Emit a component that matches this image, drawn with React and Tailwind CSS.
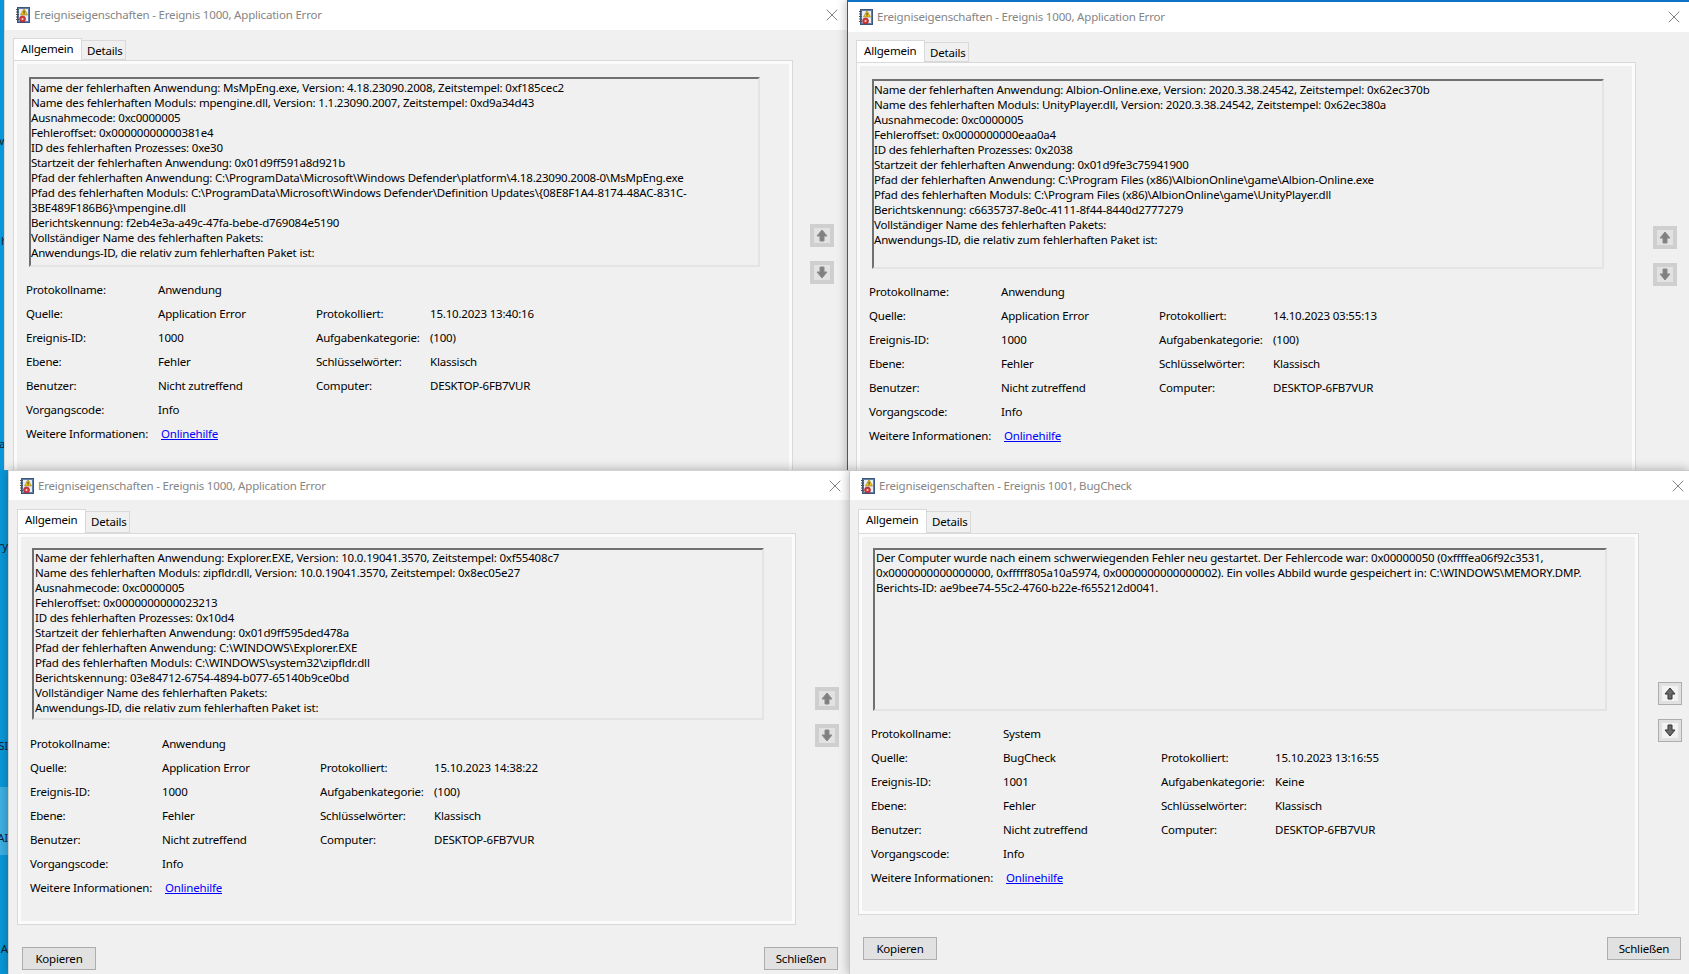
import React from 'react';
import { X } from 'lucide-react';

const Stack = '[font-family:"Noto_Sans","Open_Sans",sans-serif] text-[11.5px] tracking-[-0.19px]';

function LogIcon() {
    return (
        <svg width="16" height="16" viewBox="0 0 16 16" className="shrink-0">
            <rect x="2.5" y="0.5" width="12" height="15" fill="#5f7fae" stroke="#3d5680" />
            <rect x="4" y="2" width="9" height="12" fill="#e9edf4" />
            <path d="M1 2.5h3M1 5h3M1 7.5h3M1 10h3M1 12.5h3" stroke="#4b4f58" strokeWidth="1" />
            <path d="M9 1.5 L12.5 8 H5.5 Z" fill="#f2c81e" stroke="#9a7a10" strokeWidth="0.6" />
            <rect x="8.6" y="3.8" width="0.9" height="2.2" fill="#222" />
            <rect x="8.6" y="6.4" width="0.9" height="0.9" fill="#222" />
            <circle cx="7.5" cy="12" r="3" fill="#d8383a" stroke="#8f1f22" strokeWidth="0.6" />
            <circle cx="7.5" cy="12" r="1" fill="#f4d3d3" />
        </svg>
    );
}

function ArrowIcon({ down, active }) {
    return (
        <svg width="12" height="13" viewBox="0 0 12 13">
            <path
                d={down ? 'M4 1h4v5h3l-5 6-5-6h3z' : 'M6 1l5 6H8v5H4V7H1z'}
                fill={active ? '#6a6a6a' : '#808080'}
                stroke={active ? '#333333' : '#8a8a8a'}
                strokeWidth="1"
            />
        </svg>
    );
}

function ArrowButton({ down, active }) {
    if (active) {
        return (
            <div className="w-6 h-[23px] border border-[#adadad] bg-[#e1e1e1] flex items-center justify-center">
                <div className="w-4 h-[15px] bg-[#f3f3f3] flex items-center justify-center">
                    <ArrowIcon down={down} active />
                </div>
            </div>
        );
    }
    return (
        <div className="w-6 h-[23px] bg-[#cfcfcf] flex items-center justify-center">
            <div className="w-4 h-[15px] bg-[#e2e2e2] flex items-center justify-center">
                <ArrowIcon down={down} />
            </div>
        </div>
    );
}

function Button({ label }) {
    return (
        <div className="w-[74px] h-[23px] border border-[#adadad] bg-[#e1e1e1] flex items-center justify-center text-black">
            {label}
        </div>
    );
}

function Fields({ rows, gridClass }) {
    return (
        <div className={`grid grid-cols-[132px_158px_114px_1fr] auto-rows-[24px] items-center leading-[15px] ${gridClass}`}>
            {rows.map(row => (
                <React.Fragment key={row[0]}>
                    <div className="whitespace-nowrap">{row[0]}</div>
                    {row[0] === 'Weitere Informationen:' ? (
                        <div><span className="ml-[3px] text-[#0000ff] underline">{row[1]}</span></div>
                    ) : (
                        <div>{row[1]}</div>
                    )}
                    <div>{row[2]}</div>
                    <div>{row[3]}</div>
                </React.Fragment>
            ))}
        </div>
    );
}

function EventWindow({ w }) {
    return (
        <div className={`absolute overflow-hidden bg-[#f0f0f0] text-black ${Stack} ${w.frame}`}>
            <div className={`bg-white flex items-center justify-between ${w.title}`}>
                <div className="flex items-center gap-[3px] pl-[10px]">
                    <LogIcon />
                    <span className="text-[#858585] leading-[16px]">{w.caption}</span>
                </div>
                <X size={20} strokeWidth={1.1} className="text-[#777777]" />
            </div>
            <div className="pl-[8px]">
                <div className={`flex items-end ${w.tabs}`}>
                    <div className="h-full w-[69px] bg-white border border-b-0 border-[#d9d9d9] pl-[7px] pt-[1px] text-black relative z-10">Allgemein</div>
                    <div className="h-[calc(100%-2px)] w-[44px] bg-[#f0f0f0] border border-l-0 border-[#d9d9d9] pl-[5px] pt-[1px]">Details</div>
                </div>
                <div className="flex items-start">
                    <div className={`border border-[#d9d9d9] shrink-0 ${w.panel}`}>
                        <div className={`h-full border-[3px] border-[#fbfbfb] ${w.inner}`}>
                            <div className={`border-2 border-t-[#707070] border-l-[#707070] border-r-[#e4e4e4] border-b-[#e4e4e4] leading-[15px] ${w.box}`}>
                                {w.lines.map(l => (
                                    <div key={l} className="whitespace-nowrap">{l}</div>
                                ))}
                            </div>
                            <Fields rows={w.rows} gridClass={w.grid} />
                        </div>
                    </div>
                    <div className={`flex flex-col gap-[14px] ${w.arrows}`}>
                        <ArrowButton active={w.active} />
                        <ArrowButton down active={w.active} />
                    </div>
                </div>
                {w.footer && (
                    <div className={`flex justify-between pl-[5px] ${w.footer}`}>
                        <Button label="Kopieren" />
                        <Button label="Schließen" />
                    </div>
                )}
            </div>
        </div>
    );
}

const appFields = when => [
    ['Protokollname:', 'Anwendung', '', ''],
    ['Quelle:', 'Application Error', 'Protokolliert:', when],
    ['Ereignis-ID:', '1000', 'Aufgabenkategorie:', '(100)'],
    ['Ebene:', 'Fehler', 'Schlüsselwörter:', 'Klassisch'],
    ['Benutzer:', 'Nicht zutreffend', 'Computer:', 'DESKTOP-6FB7VUR'],
    ['Vorgangscode:', 'Info', '', ''],
    ['Weitere Informationen:', 'Onlinehilfe', '', ''],
];

const windows = [
    {
        frame: 'left-[4px] top-0 w-[844px] h-[470px] border-l border-[#d8d8d8]',
        title: 'h-[30px] pr-[6px]',
        caption: 'Ereigniseigenschaften - Ereignis 1000, Application Error',
        tabs: 'h-[22px] mt-[8px]',
        panel: 'w-[780px] h-[420px]',
        inner: 'pt-[13px] pl-[12px]',
        box: 'w-[731px] h-[190px] pt-[1px]',
        grid: 'mt-[10px] -ml-[3px]',
        arrows: 'ml-[17px] pt-[164px]',
        lines: [
            'Name der fehlerhaften Anwendung: MsMpEng.exe, Version: 4.18.23090.2008, Zeitstempel: 0xf185cec2',
            'Name des fehlerhaften Moduls: mpengine.dll, Version: 1.1.23090.2007, Zeitstempel: 0xd9a34d43',
            'Ausnahmecode: 0xc0000005',
            'Fehleroffset: 0x00000000000381e4',
            'ID des fehlerhaften Prozesses: 0xe30',
            'Startzeit der fehlerhaften Anwendung: 0x01d9ff591a8d921b',
            'Pfad der fehlerhaften Anwendung: C:\\ProgramData\\Microsoft\\Windows Defender\\platform\\4.18.23090.2008-0\\MsMpEng.exe',
            'Pfad des fehlerhaften Moduls: C:\\ProgramData\\Microsoft\\Windows Defender\\Definition Updates\\{08E8F1A4-8174-48AC-831C-',
            '3BE489F186B6}\\mpengine.dll',
            'Berichtskennung: f2eb4e3a-a49c-47fa-bebe-d769084e5190',
            'Vollständiger Name des fehlerhaften Pakets:',
            'Anwendungs-ID, die relativ zum fehlerhaften Paket ist:',
        ],
        rows: appFields('15.10.2023 13:40:16'),
    },
    {
        frame: 'left-[847px] top-0 w-[842px] h-[470px] border-l border-t-2 border-l-[#3c5a75] border-t-[#0f72c4] shadow-[0_0_10px_rgba(0,0,0,0.3)]',
        title: 'h-[30px] pr-[5px]',
        caption: 'Ereigniseigenschaften - Ereignis 1000, Application Error',
        tabs: 'h-[22px] mt-[8px]',
        panel: 'w-[780px] h-[420px]',
        inner: 'pt-[13px] pl-[12px]',
        box: 'w-[732px] h-[190px] pt-[1px]',
        grid: 'mt-[10px] -ml-[3px]',
        arrows: 'ml-[17px] pt-[164px]',
        lines: [
            'Name der fehlerhaften Anwendung: Albion-Online.exe, Version: 2020.3.38.24542, Zeitstempel: 0x62ec370b',
            'Name des fehlerhaften Moduls: UnityPlayer.dll, Version: 2020.3.38.24542, Zeitstempel: 0x62ec380a',
            'Ausnahmecode: 0xc0000005',
            'Fehleroffset: 0x0000000000eaa0a4',
            'ID des fehlerhaften Prozesses: 0x2038',
            'Startzeit der fehlerhaften Anwendung: 0x01d9fe3c75941900',
            'Pfad der fehlerhaften Anwendung: C:\\Program Files (x86)\\AlbionOnline\\game\\Albion-Online.exe',
            'Pfad des fehlerhaften Moduls: C:\\Program Files (x86)\\AlbionOnline\\game\\UnityPlayer.dll',
            'Berichtskennung: c6635737-8e0c-4111-8f44-8440d2777279',
            'Vollständiger Name des fehlerhaften Pakets:',
            'Anwendungs-ID, die relativ zum fehlerhaften Paket ist:',
        ],
        rows: appFields('14.10.2023 03:55:13'),
    },
    {
        frame: 'left-[8px] top-[470px] w-[841px] h-[504px] border-l border-t border-[#d0d0d0] shadow-[0_0_10px_rgba(0,0,0,0.3)]',
        title: 'h-[29px] pr-[4px]',
        caption: 'Ereigniseigenschaften - Ereignis 1000, Application Error',
        tabs: 'h-[24px] mt-[9px]',
        panel: 'w-[779px] h-[392px]',
        inner: 'pt-[11px] pl-[11px]',
        box: 'w-[732px] h-[172px] pl-[1px]',
        grid: 'mt-[11px] -ml-[2px]',
        arrows: 'ml-[19px] pt-[154px]',
        footer: 'mt-[22px] w-[821px]',
        lines: [
            'Name der fehlerhaften Anwendung: Explorer.EXE, Version: 10.0.19041.3570, Zeitstempel: 0xf55408c7',
            'Name des fehlerhaften Moduls: zipfldr.dll, Version: 10.0.19041.3570, Zeitstempel: 0x8ec05e27',
            'Ausnahmecode: 0xc0000005',
            'Fehleroffset: 0x0000000000023213',
            'ID des fehlerhaften Prozesses: 0x10d4',
            'Startzeit der fehlerhaften Anwendung: 0x01d9ff595ded478a',
            'Pfad der fehlerhaften Anwendung: C:\\WINDOWS\\Explorer.EXE',
            'Pfad des fehlerhaften Moduls: C:\\WINDOWS\\system32\\zipfldr.dll',
            'Berichtskennung: 03e84712-6754-4894-b077-65140b9ce0bd',
            'Vollständiger Name des fehlerhaften Pakets:',
            'Anwendungs-ID, die relativ zum fehlerhaften Paket ist:',
        ],
        rows: appFields('15.10.2023 14:38:22'),
    },
    {
        frame: 'left-[849px] top-[470px] w-[840px] h-[504px] border-l border-t border-[#c8c8c8] shadow-[0_0_10px_rgba(0,0,0,0.3)]',
        title: 'h-[29px] pr-[1px]',
        caption: 'Ereigniseigenschaften - Ereignis 1001, BugCheck',
        tabs: 'h-[24px] mt-[9px]',
        panel: 'w-[781px] h-[382px]',
        inner: 'pt-[11px] pl-[11px]',
        box: 'w-[734px] h-[163px] pl-[1px]',
        grid: 'mt-[10px] -ml-[2px]',
        arrows: 'ml-[19px] pt-[149px]',
        footer: 'mt-[22px] w-[823px]',
        active: true,
        lines: [
            'Der Computer wurde nach einem schwerwiegenden Fehler neu gestartet. Der Fehlercode war: 0x00000050 (0xffffea06f92c3531,',
            '0x0000000000000000, 0xfffff805a10a5974, 0x0000000000000002). Ein volles Abbild wurde gespeichert in: C:\\WINDOWS\\MEMORY.DMP.',
            'Berichts-ID: ae9bee74-55c2-4760-b22e-f655212d0041.',
        ],
        rows: [
            ['Protokollname:', 'System', '', ''],
            ['Quelle:', 'BugCheck', 'Protokolliert:', '15.10.2023 13:16:55'],
            ['Ereignis-ID:', '1001', 'Aufgabenkategorie:', 'Keine'],
            ['Ebene:', 'Fehler', 'Schlüsselwörter:', 'Klassisch'],
            ['Benutzer:', 'Nicht zutreffend', 'Computer:', 'DESKTOP-6FB7VUR'],
            ['Vorgangscode:', 'Info', '', ''],
            ['Weitere Informationen:', 'Onlinehilfe', '', ''],
        ],
    },
];

// bits of desktop icon captions that stick out left of the windows
const desktopLabels = [
    { text: 'l', cls: 'top-[32px]' },
    { text: 'w', cls: 'top-[133px]' },
    { text: 'h', cls: 'top-[233px]' },
    { text: 'al', cls: 'top-[436px]' },
    { text: 'ry', cls: 'top-[538px]' },
    { text: 'SI', cls: 'top-[738px]' },
    { text: 'AI', cls: 'top-[830px]' },
    { text: 'A', cls: 'top-[941px]' },
];

export default function App() {
    return (
        <div className="relative w-[1689px] h-[974px] overflow-hidden bg-[#0a97d9]">
            <div className="absolute left-0 top-[787px] w-[8px] h-[68px] bg-[#3fb0e4]" />
            {desktopLabels.map(d => (
                <div key={d.cls} className={`absolute right-[1681px] leading-[15px] text-[#10222e] ${Stack} ${d.cls}`}>
                    {d.text}
                </div>
            ))}
            {windows.map(w => (
                <EventWindow key={w.frame} w={w} />
            ))}
        </div>
    );
}
